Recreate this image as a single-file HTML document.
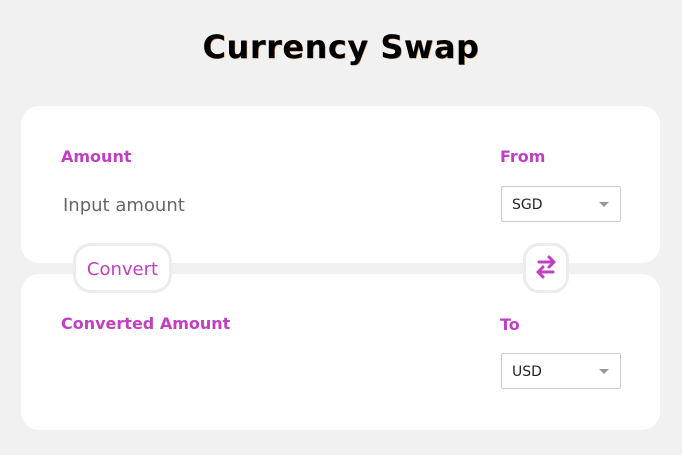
<!DOCTYPE html>
<html><head><style>
body{margin:0;width:682px;height:455px;background:#f1f1f1;font-family:"DejaVu Sans","Liberation Sans",sans-serif;position:relative;overflow:hidden}
h1{position:absolute;top:28px;left:0;width:682px;text-align:center;margin:0;font-size:32px;font-weight:bold;color:#000;letter-spacing:0.5px;text-shadow:0.5px 0.5px 0 #c08040}
.card{position:absolute;left:21px;width:639px;background:#fff;border-radius:18px}
.lbl{position:absolute;color:#c13fc1;font-weight:bold;font-size:16px}
.sel{position:absolute;left:501px;width:118px;height:34px;border:1px solid #ccc;border-radius:2px;background:#fff;font-size:14px;line-height:36px;box-sizing:content-box}
.sel span{position:absolute;left:10px;color:#222}
.sel i{position:absolute;right:11px;top:15px;border-left:5px solid transparent;border-right:5px solid transparent;border-top:5px solid #999}
.btn{position:absolute;background:#fff;border:3px solid #ececec;box-sizing:border-box}
</style></head><body>
<h1>Currency Swap</h1>
<div class="card" style="top:106px;height:157px"></div>
<div class="card" style="top:274px;height:156px"></div>
<div class="lbl" style="left:61px;top:147px">Amount</div>
<div class="lbl" style="left:500px;top:147px">From</div>
<div style="position:absolute;left:63px;top:195px;font-size:18px;color:#666">Input amount</div>
<div class="sel" style="top:186px"><span>SGD</span><i></i></div>
<div class="btn" style="left:73px;top:243px;width:99px;height:50px;border-radius:18px;color:#c13fc1;font-size:18px;text-align:center;line-height:48px">Convert</div>
<div class="btn" style="left:523px;top:243px;width:46px;height:50px;border-radius:16px">
<svg width="40" height="44" viewBox="0 0 40 44" style="position:absolute;left:0;top:0"><g fill="none" stroke="#c13fc1" stroke-width="3" stroke-linecap="round" stroke-linejoin="round"><path d="M13 16h15M23 11l5 5-5 5"/><path d="M27 26H12M17 21l-5 5 5 5"/></g></svg></div>
<div class="lbl" style="left:61px;top:314px">Converted Amount</div>
<div class="lbl" style="left:500px;top:315px">To</div>
<div class="sel" style="top:353px"><span>USD</span><i></i></div>
</body></html>
